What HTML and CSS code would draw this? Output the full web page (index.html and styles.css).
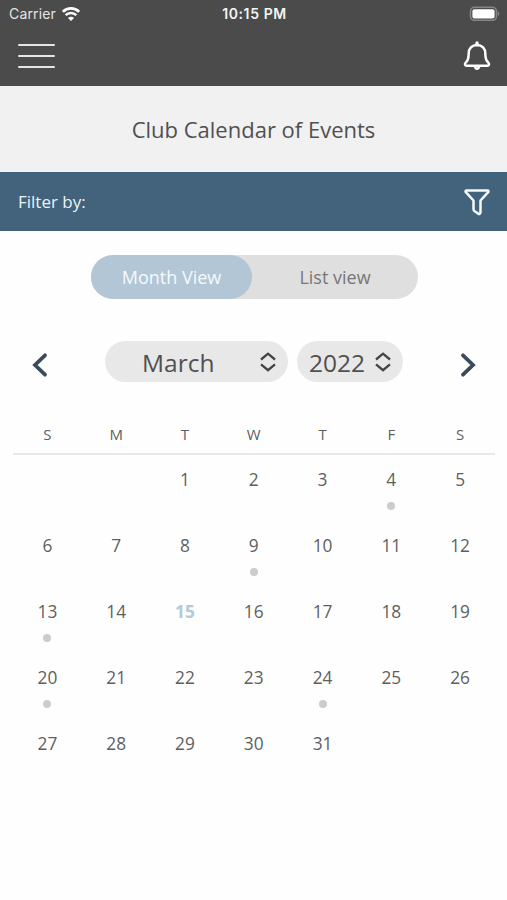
FILE: index.html
```html
<!DOCTYPE html>
<html lang="en">

<head>
    <meta charset="UTF-8">
    <meta name="viewport" content="width=device-width, initial-scale=1.0">
    <title>Club Calendar of Events</title>

    <link rel="stylesheet" href="styles.css">
</head>

<body>
    <header class="header">
        <div class="status-bar">
            <div class="carrier">
                <span>Carrier</span>
                <svg class="wifi" width="18" height="14" viewBox="0 0 18 14" fill="none" stroke="#fff" stroke-width="2.8">
                    <path d="M0.9 4.8a11.5 11.5 0 0 1 16.2 0" />
                    <path d="M3.7 8.2a7.4 7.4 0 0 1 10.6 0" stroke-width="2.4" />
                    <path d="M9 14L6 10.9a4.2 4.2 0 0 1 6 0z" fill="#fff" stroke="none" />
                </svg>
            </div>
            <span class="time">10:15 PM</span>
            <svg class="battery" width="31" height="16" viewBox="0 0 31 16">
                <rect x="1.5" y="1.3" width="26" height="13" rx="4" fill="#4b4b4b" stroke="#858585" stroke-width="1.6" />
                <rect x="3.4" y="3.2" width="22.2" height="9.2" rx="2" fill="#fff" />
                <path d="M28.8 5.5v4.4q1.6-.7 1.6-2.2t-1.6-2.2z" fill="#858585" />
            </svg>
        </div>
        <div class="nav">
            <button class="icon-button menu" aria-label="Menu">
                <span></span>
                <span></span>
                <span></span>
            </button>
            <button class="icon-button" aria-label="Notifications">
                <svg width="28" height="32" viewBox="0 0 28 32" fill="none" stroke="#fff" stroke-width="2.5" stroke-linecap="round" stroke-linejoin="round">
                    <path d="M14 3v1.7" stroke-width="3.4" />
                    <path d="M14 5c-5.2 0-8.3 3.7-8.3 8.4 0 5.5-.8 7.2-3 9.2-1.4 1.4-.8 3.1 1 3.1h20.6c1.8 0 2.4-1.7 1-3.1-2.2-2-3-3.7-3-9.2 0-4.7-3.1-8.4-8.3-8.4z" />
                    <path d="M11.8 26.5a2.3 3 0 0 0 4.4 0" />
                </svg>
            </button>
        </div>
    </header>

    <h1 class="title">Club Calendar of Events</h1>

    <div class="filter">
        <span>Filter by:</span>
        <svg width="28" height="28" viewBox="0 0 28 28" fill="none" stroke="#f4f9fd" stroke-width="2.5" stroke-linejoin="round">
            <path d="M3.5 2.5h21c1 0 1.3 1 .7 1.7L17.5 12.5v11.8c0 1.5-1.2 2-2.3 1.3l-3.5-2.3c-.7-.5-1.2-1-1.2-2v-8.8L2.8 4.2c-.6-.7-.3-1.7.7-1.7z" />
        </svg>
    </div>

    <div class="toggle">
        <button class="toggle-option active">Month View</button>
        <button class="toggle-option">List view</button>
    </div>

    <div class="picker">
        <button class="arrow" aria-label="Previous month">
            <svg width="16" height="26" viewBox="0 0 16 26"><path d="M13 3.3L3 13l10 9.7" /></svg>
        </button>
        <div class="selects">
            <button class="select month">
                <span>March</span>
                <svg width="18" height="20" viewBox="0 0 18 20"><path d="M2 7.5l7-5.8 7 5.8M2 12.3l7 5.8 7-5.8" /></svg>
            </button>
            <button class="select year">
                <span>2022</span>
                <svg width="18" height="20" viewBox="0 0 18 20"><path d="M2 7.5l7-5.8 7 5.8M2 12.3l7 5.8 7-5.8" /></svg>
            </button>
        </div>
        <button class="arrow" aria-label="Next month">
            <svg width="16" height="26" viewBox="0 0 16 26"><path d="M3 3.3l10 9.7-10 9.7" /></svg>
        </button>
    </div>

    <div class="calendar">
        <div class="weekdays">
            <span>S</span>
            <span>M</span>
            <span>T</span>
            <span>W</span>
            <span>T</span>
            <span>F</span>
            <span>S</span>
        </div>
        <div class="days">
            <div class="day first">1</div>
            <div class="day">2</div>
            <div class="day">3</div>
            <div class="day event">4</div>
            <div class="day">5</div>
            <div class="day">6</div>
            <div class="day">7</div>
            <div class="day">8</div>
            <div class="day event">9</div>
            <div class="day">10</div>
            <div class="day">11</div>
            <div class="day">12</div>
            <div class="day event">13</div>
            <div class="day">14</div>
            <div class="day today">15</div>
            <div class="day">16</div>
            <div class="day">17</div>
            <div class="day">18</div>
            <div class="day">19</div>
            <div class="day event">20</div>
            <div class="day">21</div>
            <div class="day">22</div>
            <div class="day">23</div>
            <div class="day event">24</div>
            <div class="day">25</div>
            <div class="day">26</div>
            <div class="day">27</div>
            <div class="day">28</div>
            <div class="day">29</div>
            <div class="day">30</div>
            <div class="day">31</div>
        </div>
    </div>
</body>

</html>
```

FILE: styles.css
```css
* {
    box-sizing: border-box;
}

body {
    margin: 0;
    background-color: #fefefe;
    color: #5e5e5e;
    font-family: "Open Sans", sans-serif;
}

button {
    padding: 0;
    border: none;
    background: none;
    color: inherit;
    font-family: inherit;
    cursor: pointer;
}

svg {
    display: block;
}

/* Header */
.header {
    height: 86px;
    background-color: #4b4b4b;
    color: #fff;
}

.status-bar {
    display: grid;
    grid-template-columns: 1fr auto 1fr;
    align-items: center;
    height: 27px;
    padding: 0 7px 0 9px;
    font-family: Inter, sans-serif;
    font-size: 14px;
}

.carrier {
    display: flex;
    align-items: center;
    gap: 6px;
    color: #e4e4e4;
    letter-spacing: 0.15px;
}

.time {
    font-weight: 600;
    color: #f4f4f4;
    letter-spacing: 0.6px;
}

.battery {
    justify-self: end;
}

.nav {
    display: flex;
    justify-content: space-between;
    align-items: center;
    height: 58px;
    padding: 0 16px 0 18px;
}

.menu {
    display: flex;
    flex-direction: column;
    gap: 8.5px;
    width: 37px;
}

.menu span {
    height: 2.5px;
    border-radius: 1.5px;
    background-color: #e6e6e6;
}

/* Title and filter */
.title {
    display: flex;
    justify-content: center;
    align-items: center;
    height: 86px;
    margin: 0;
    background-color: #f1f1f1;
    color: #505050;
    font-size: 22px;
    font-weight: normal;
}

.filter {
    display: flex;
    justify-content: space-between;
    align-items: center;
    height: 59px;
    padding: 0 16px 0 18px;
    background-color: #42637b;
    color: #e9f3fa;
    font-size: 17px;
}

/* Month / list toggle */
.toggle {
    display: flex;
    width: 327px;
    height: 44px;
    margin: 24px 89px 0 91px;
    border-radius: 22px;
    background-color: #dfdfdf;
}

.toggle-option {
    flex: 1;
    border-radius: 22px;
    color: #777;
    font-size: 18px;
}

.toggle-option.active {
    flex: 0 0 161px;
    background-color: #b2c6d6;
    color: #f5fafe;
}

/* Month and year pickers */
.picker {
    display: flex;
    justify-content: space-between;
    margin-top: 42px;
    padding: 0 31px 0 32px;
}

.arrow {
    padding-top: 6px;
}

.arrow path {
    fill: none;
    stroke: #3a4c5c;
    stroke-width: 3.8;
    stroke-linecap: round;
}

.selects {
    display: flex;
    gap: 9px;
}

.select {
    display: flex;
    justify-content: space-between;
    align-items: center;
    height: 41px;
    border-radius: 21px;
    background-color: #e8e8e8;
    color: #505050;
    font-size: 24.5px;
}

.select span {
    padding-top: 2px;
}

.select path {
    fill: none;
    stroke: #454545;
    stroke-width: 2.4;
}

.month {
    width: 183px;
    padding: 0 11px 0 37px;
}

.year {
    width: 106px;
    padding: 0 11px 0 12px;
}

/* Calendar */
.calendar {
    margin: 38px 12.5px 0 13px;
}

.weekdays,
.days {
    display: grid;
    grid-template-columns: repeat(7, 1fr);
    text-align: center;
}

.weekdays {
    height: 35px;
    border-bottom: 2px solid #e8e8e8;
    font-size: 15px;
    line-height: 28px;
}

.days {
    grid-auto-rows: 66px;
}

.day {
    padding-top: 13px;
    font-size: 17.3px;
    line-height: 24px;
}

.day.first {
    grid-column-start: 3;
}

.day.today {
    color: #b2cad9;
    font-weight: bold;
}

.day.event::after {
    content: "";
    display: block;
    width: 8px;
    height: 8px;
    margin: 10px auto 0;
    border-radius: 50%;
    background-color: #ccc;
}
```
